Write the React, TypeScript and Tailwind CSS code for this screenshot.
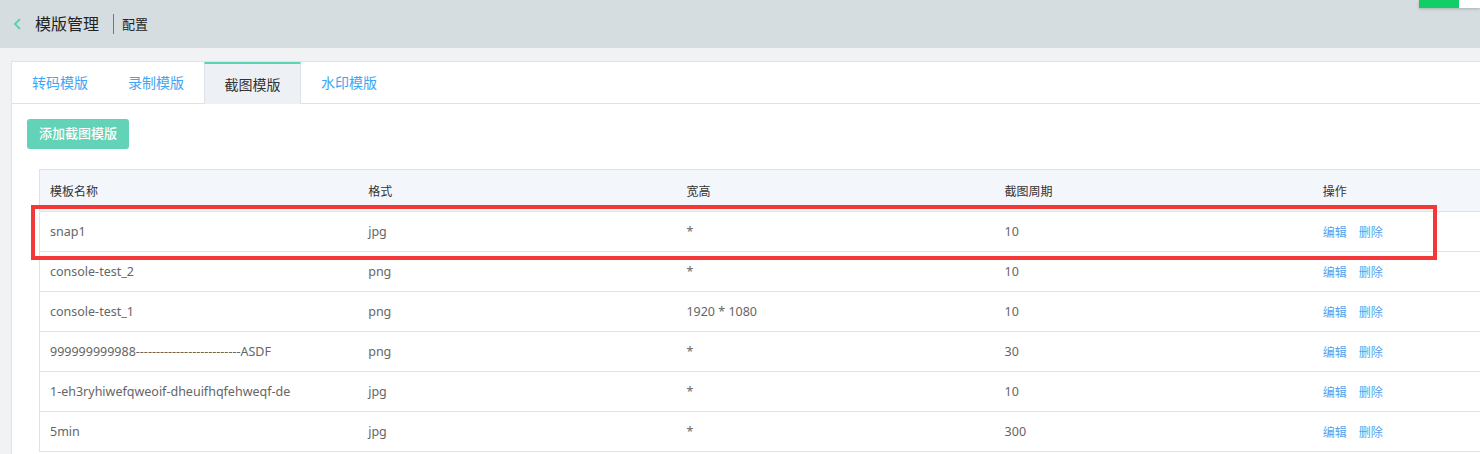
import React from "react";

const rows = [
  ["snap1", "jpg", "*", "10"],
  ["console-test_2", "png", "*", "10"],
  ["console-test_1", "png", "1920 * 1080", "10"],
  ["999999999988--------------------------ASDF", "png", "*", "30"],
  ["1-eh3ryhiwefqweoif-dheuifhqfehweqf-de", "jpg", "*", "10"],
  ["5min", "jpg", "*", "300"],
];

const tabs = ["转码模版", "录制模版", "截图模版", "水印模版"];

export default function App() {
  return (
    <div
      className="relative w-[1480px] h-[454px] overflow-hidden bg-[#f1f2f4]"
      style={{ fontFamily: '"Noto Sans", "Noto Sans CJK SC", sans-serif' }}
    >
      {/* header */}
      <div className="relative h-[48px] bg-[#d5dde1] flex items-center pl-[12px]">
        <svg width="12" height="14" viewBox="0 0 12 14" className="mr-[11px]">
          <path d="M8 2 L3 7 L8 12" fill="none" stroke="#5dd3b5" strokeWidth="2" />
        </svg>
        <span className="text-[16px] text-[#222] leading-none">模版管理</span>
        <span className="ml-[14px] mr-[8px] w-px h-[20px] bg-[#777]" />
        <span className="text-[13px] text-[#222] leading-none">配置</span>
        <div className="absolute top-0 left-[1419px] w-[61px] h-[8px] flex shadow-[0_1px_3px_rgba(0,0,0,0.2)]">
          <div className="w-[40px] h-full bg-[#13ce66]" />
          <div className="flex-1 h-full bg-white" />
        </div>
      </div>

      {/* card */}
      <div className="mt-[13px] ml-[11px] w-[1600px] h-[400px] bg-white border border-[#dde3e8]">
        <div className="flex h-[42px] border-b border-[#dde3e8]">
          {tabs.map((t, i) =>
            i === 2 ? (
              <div
                key={t}
                className="w-[97px] h-[42px] -mb-px flex items-center justify-center bg-[#edf1f5] border-x border-[#dde3e8] border-t-2 border-t-[#5dd3b5] text-[14px] text-[#333]"
              >
                {t}
              </div>
            ) : (
              <div key={t} className="w-[96px] flex items-center justify-center text-[14px] text-[#3ea6f5]">
                {t}
              </div>
            )
          )}
        </div>

        <div className="pl-[15px] pt-[15px]">
          <button className="w-[102px] h-[30px] rounded-[3px] bg-[#62d3b6] text-white text-[13px] font-medium">
            添加截图模版
          </button>
        </div>

        <div className="relative ml-[27px] mt-[20px] w-[1592px] border-l border-t border-[#dde3e8]">
          <div className="grid grid-cols-5 h-[42px] pt-[2px] bg-[#f3f6fa] border-b border-[#dde3e8] items-center text-[12px] text-[#333]">
            {["模板名称", "格式", "宽高", "截图周期", "操作"].map((h) => (
              <div key={h} className="pl-[10px]">{h}</div>
            ))}
          </div>
          {rows.map((r, idx) => (
            <div
              key={idx}
              className="grid grid-cols-5 h-[40px] pt-[2px] border-b border-[#dde3e8] items-center text-[12.5px] text-[#666]"
            >
              {r.map((c, j) => (
                <div key={j} className="pl-[10px] whitespace-nowrap">{c}</div>
              ))}
              <div className="pl-[10px] flex gap-[12px] text-[12px] text-[#50a4f0]">
                <span>编辑</span>
                <span>删除</span>
              </div>
            </div>
          ))}
          <div className="absolute left-[-9px] top-[35px] w-[1406px] h-[55px] border-[4px] border-[#f23838] pointer-events-none" />
        </div>
      </div>
    </div>
  );
}
